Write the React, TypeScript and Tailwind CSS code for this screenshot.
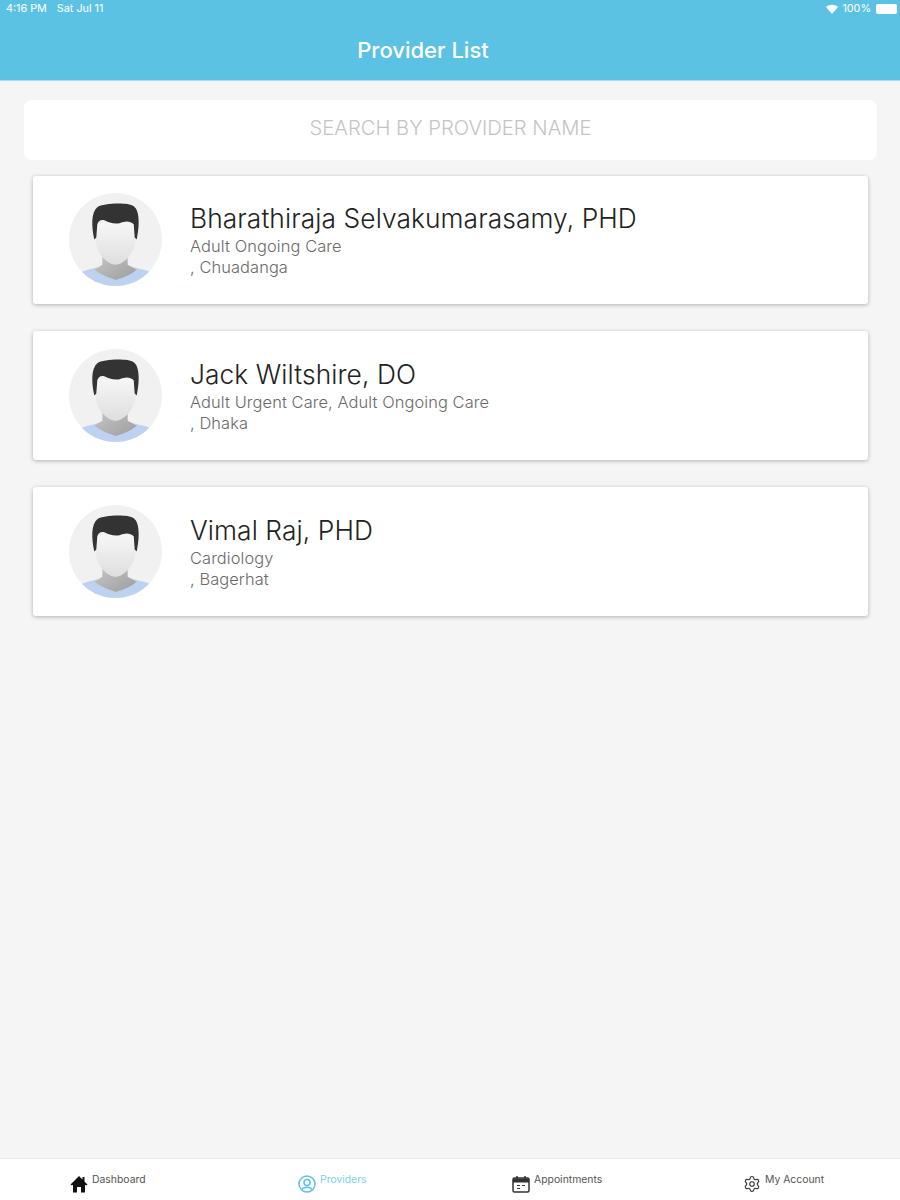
import React from "react";
import { Settings } from "lucide-react";

function Avatar({ id, className }: { id: string; className?: string }) {
  return (
    <svg width="93" height="93" viewBox="0 0 92 92" className={`shrink-0 ${className ?? ""}`}>
      <defs>
        <clipPath id={`clip-${id}`}><circle cx="46" cy="46" r="46" /></clipPath>
        <linearGradient id={`neck-${id}`} x1="0" y1="0" x2="1" y2="1">
          <stop offset="0" stopColor="#c9c9c9" />
          <stop offset="1" stopColor="#9d9d9d" />
        </linearGradient>
        <linearGradient id={`face-${id}`} x1="0" y1="0" x2="0" y2="1">
          <stop offset="0" stopColor="#f6f6f6" />
          <stop offset="1" stopColor="#dedede" />
        </linearGradient>
      </defs>
      <circle cx="46" cy="46" r="46" fill="#f1f1f1" />
      <g clipPath={`url(#clip-${id})`}>
        <path d="M13 78 C20 75 28 74 34 72 L58 72 C64 74 72 75 80 78 L80 92 L13 92 Z" fill="#bcd2f0" />
        <path d="M33 58 L33 71 L25 76 C33 82 40 84 46 86 C54 84 61 81 67 76 L58 71 L58 58 Z" fill={`url(#neck-${id})`} />
        <path d="M26 30 L66 30 L66 46 C65 60 54 71 46 71 C38 71 27 60 26 46 Z" fill={`url(#face-${id})`} />
        <path d="M25 46 C22 32 22 19 28 14 C34 10 58 9 64 13 C70 17 70 32 67 46 L65 44 L64 31 C60 27 55 28 50 30 C44 31 39 29 35 27 C31 26 29 28 28 31 L27 44 Z" fill="#333333" />
      </g>
    </svg>
  );
}

const providers = [
  { id: "a", name: "Bharathiraja Selvakumarasamy, PHD", spec: "Adult Ongoing Care", loc: ", Chuadanga", h: "h-[128px]", av: "mb-[2px]" },
  { id: "b", name: "Jack Wiltshire, DO", spec: "Adult Urgent Care, Adult Ongoing Care", loc: ", Dhaka", h: "h-[129px]", av: "" },
  { id: "c", name: "Vimal Raj, PHD", spec: "Cardiology", loc: ", Bagerhat", h: "h-[129px]", av: "" },
];

function Card({ p }: { p: (typeof providers)[number] }) {
  return (
    <div className={`${p.h} flex items-center gap-[28px] rounded-[3px] bg-white pl-9 shadow-[0_1px_4px_rgba(0,0,0,0.28)]`}>
      <Avatar id={p.id} className={p.av} />
      <div className="flex flex-col">
        <div className="pt-[1px] text-[26.3px] leading-[32px] font-light tracking-[0.1px] text-[#222222]">{p.name}</div>
        <div className="mt-[1px] text-[16.4px] leading-[21px] font-light tracking-[0.1px] text-[#6a6a6a]">{p.spec}</div>
        <div className="text-[16.4px] leading-[21px] font-light tracking-[0.1px] text-[#6a6a6a]">{p.loc}</div>
      </div>
    </div>
  );
}

function Tab({ label, active, icon, className }: { label: string; active?: boolean; icon: React.ReactNode; className: string }) {
  return (
    <div className={`flex items-start gap-[4px] ${className}`}>
      <div className="mt-[16px]">{icon}</div>
      <span className={`mt-[15px] text-[10.4px] leading-[12px] ${active ? "text-[#7fcfe9]" : "text-[#555555]"}`}>{label}</span>
    </div>
  );
}

export default function App() {
  return (
    <div className="flex h-[1200px] w-[900px] flex-col bg-[#f5f5f5] font-['Inter','Liberation_Sans',sans-serif]">
      <header className="h-[81px] shrink-0 border-b border-[#a9def0] bg-[#5bc2e4] text-white">
        <div className="flex h-[18px] items-center justify-between pr-[3px] pl-[6px] text-[10.8px]">
          <div className="flex gap-[10px]"><span>4:16 PM</span><span>Sat Jul 11</span></div>
          <div className="flex items-center gap-[4px]">
            <svg width="12" height="10" viewBox="0 0 12 10"><path d="M0 3 C3.5 0 8.5 0 12 3 L6 10 Z" fill="#fff" /></svg>
            <span>100%</span>
            <div className="ml-[1px] h-[10px] w-[21px] rounded-[2px] bg-white" />
          </div>
        </div>
        <h1 className="mt-[17px] pr-[54px] text-center text-[22px] leading-[30px] font-medium">Provider List</h1>
      </header>

      <main className="flex-1 px-[24px] pt-[19px]">
        <div className="mr-[-1px] flex h-[60px] items-center justify-center rounded-[8px] bg-white pb-[3px] text-[20.2px] font-light text-[#c4c4c4]">
          SEARCH BY PROVIDER NAME
        </div>
        <div className="mt-[16px] flex flex-col gap-[27px] pl-[9px] pr-[8px]">
          {providers.map((p) => <Card key={p.id} p={p} />)}
        </div>
      </main>

      <nav className="grid h-[42px] shrink-0 grid-cols-4 border-t border-[#e8e8e8] bg-white">
        <Tab className="pl-[70px]" label="Dashboard" icon={
          <svg width="18" height="18" viewBox="0 0 18 18"><path d="M9 1 L0.5 9.5 L2 10.5 L3 9.8 L3 17.5 L7 17.5 L7 12 L11 12 L11 17.5 L15 17.5 L15 9.8 L16 10.5 L17.5 9.5 L14.5 6.5 L14.5 2 L12.5 2 L12.5 4.5 Z" fill="#111" /></svg>
        } />
        <Tab className="pl-[73px]" active label="Providers" icon={
          <svg width="18" height="18" viewBox="0 0 18 18" fill="none" stroke="#5bc2e4" strokeWidth="1.5"><circle cx="9" cy="9" r="8" /><circle cx="9" cy="7.5" r="3" /><path d="M4 14.5 C5.5 11.5 12.5 11.5 14 14.5" /></svg>
        } />
        <Tab className="pl-[62px]" label="Appointments" icon={
          <svg width="18" height="18" viewBox="0 0 18 18" fill="none" stroke="#333" strokeWidth="1.5"><rect x="1" y="3" width="16" height="14" rx="1.5" /><path d="M1 5.5 H17" strokeWidth="4" /><path d="M5 1 V4 M13 1 V4" /><path d="M5 10.5 H8 M10 10.5 H13 M5 13.5 H8" strokeWidth="1.2" /></svg>
        } />
        <Tab className="pl-[68px]" label="My Account" icon={<Settings size={18} strokeWidth={1.5} color="#333" />} />
      </nav>
    </div>
  );
}
